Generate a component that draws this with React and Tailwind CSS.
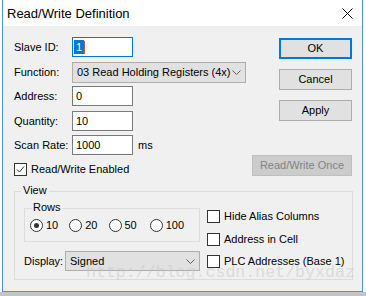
import React from 'react';

const font = { fontFamily: '"Liberation Sans", Arial, sans-serif' };

const TextBox = ({ value, width = 'w-[61px]' }) => (
  <div className={`${width} h-[20px] bg-white border border-[#7a7a7a] flex items-center pl-[3px] text-[11px] leading-none`}>
    {value}
  </div>
);

const Chevron = () => (
  <svg width="9" height="5" viewBox="0 0 9 5" className="shrink-0">
    <path d="M0.5 0.5 L4.5 4.5 L8.5 0.5" fill="none" stroke="#606060" strokeWidth="1" />
  </svg>
);

const Combo = ({ value, width }) => (
  <div className={`${width} h-[20px] bg-[#e1e1e1] border border-[#adadad] flex items-center justify-between pl-[4px] pr-[4px] text-[11px] leading-none`}>
    <span>{value}</span>
    <Chevron />
  </div>
);

const Button = ({ children, width = 'w-[73px]', primary, disabled }) => (
  <div
    className={`${width} h-[21px] flex items-center justify-center text-[11px] leading-none ${
      primary
        ? 'border-2 border-[#0078d7] bg-[#e1e1e1] text-black'
        : disabled
        ? 'border border-[#bfbfbf] bg-[#cccccc] text-[#838383]'
        : 'border border-[#adadad] bg-[#e1e1e1] text-black'
    }`}
  >
    {children}
  </div>
);

const CheckBox = ({ checked, label }) => (
  <div className="flex items-center h-[13px] gap-[4px] text-[11px] leading-none">
    <div className="w-[13px] h-[13px] bg-white border border-[#333333] flex items-center justify-center">
      {checked && (
        <svg width="9" height="9" viewBox="0 0 9 9">
          <path d="M1 4.5 L3.5 7 L8 1.5" fill="none" stroke="#333333" strokeWidth="1" />
        </svg>
      )}
    </div>
    <span>{label}</span>
  </div>
);

const Radio = ({ checked, label, className = '' }) => (
  <div className={`flex items-center h-[13px] gap-[3px] text-[11px] leading-none ${className}`}>
    <div className="w-[13px] h-[13px] rounded-full bg-white border border-[#333333] flex items-center justify-center">
      {checked && <div className="w-[5px] h-[5px] rounded-full bg-[#333333]" />}
    </div>
    <span>{label}</span>
  </div>
);

const Field = ({ label, children, className = '' }) => (
  <div className={`flex items-center ${className}`}>
    <span className="w-[58px] text-[11px] leading-none">{label}</span>
    {children}
  </div>
);

export default function App() {
  return (
    <div className="w-[366px] h-[296px] bg-white relative overflow-hidden text-black" style={font}>
      <div className="ml-[2px] w-[361px] h-[292px] border-x border-b border-[#4a94e0] flex flex-col">
        {/* title bar */}
        <div className="h-[26px] bg-white flex items-center justify-between pl-[4px] pr-[9px]">
          <span className="text-[13px] leading-none">Read/Write Definition</span>
          <svg width="11" height="11" viewBox="0 0 11 11">
            <path d="M0.5 0.5 L10.5 10.5 M10.5 0.5 L0.5 10.5" stroke="#000" strokeWidth="1" />
          </svg>
        </div>

        <div className="flex-1 bg-[#f0f0f0] flex flex-col">
          <div className="flex">
            <div className="pl-[11px] pt-[11px] flex flex-col">
              <Field label="Slave ID:">
                <div className="w-[61px] h-[20px] bg-white border border-[#0078d7] flex items-center pl-[1px] text-[11px] leading-none">
                  <span className="bg-[#0078d7] text-white px-[2px] h-[14px] flex items-center">1</span>
                  <span className="w-[1px] h-[13px] bg-[#c0602a]" />
                </div>
              </Field>
              <Field label="Function:" className="mt-[5px]">
                <Combo value="03 Read Holding Registers (4x)" width="w-[174px] h-[21px]" />
              </Field>
              <Field label="Address:" className="mt-[3px]">
                <TextBox value="0" />
              </Field>
              <Field label="Quantity:" className="mt-[5px]">
                <TextBox value="10" />
              </Field>
              <Field label="Scan Rate:" className="mt-[4px]">
                <TextBox value="1000" />
                <span className="ml-[5px] text-[11px] leading-none">ms</span>
              </Field>
              <div className="mt-[8px]">
                <CheckBox checked label="Read/Write Enabled" />
              </div>
            </div>

            <div className="ml-auto pr-[10px] pt-[12px] flex flex-col items-end">
              <Button primary>OK</Button>
              <div className="mt-[10px]"><Button>Cancel</Button></div>
              <div className="mt-[10px]"><Button>Apply</Button></div>
              <div className="mt-[34px]"><Button width="w-[100px]" disabled>Read/Write Once</Button></div>
            </div>
          </div>

          {/* View group */}
          <div className="relative ml-[11px] mr-[9px] mt-[15px] h-[89px] border border-[#dcdcdc] pt-[16px] pl-[9px] flex">
            <span className="absolute left-[6px] top-[-8px] px-[2px] bg-[#f0f0f0] text-[11px] leading-[13px]">View</span>
            <div className="flex flex-col">
              <div className="relative w-[176px] h-[34px] border border-[#dcdcdc] pt-[10px] pl-[5px] flex">
                <span className="absolute left-[7px] top-[-8px] px-[1px] bg-[#f0f0f0] text-[11px] leading-[13px]">Rows</span>
                <Radio checked label="10" />
                <Radio label="20" className="ml-[11px]" />
                <Radio label="50" className="ml-[11px]" />
                <Radio label="100" className="ml-[13px]" />
              </div>
              <div className="flex items-center mt-[9px]">
                <span className="w-[41px] text-[11px] leading-none">Display:</span>
                <Combo value="Signed" width="w-[135px]" />
              </div>
            </div>
            <div className="ml-[7px] mt-[2px] flex flex-col">
              <CheckBox label="Hide Alias Columns" />
              <div className="mt-[10px]"><CheckBox label="Address in Cell" /></div>
              <div className="mt-[9px]"><CheckBox label="PLC Addresses (Base 1)" /></div>
            </div>
          </div>
        </div>
      </div>
      <div className="h-[4px] bg-[#c4c4c4]" />

      <div
        className="absolute left-[86px] top-[265px] text-[16.6px] leading-none text-[#c8c8c8] opacity-50 pointer-events-none whitespace-nowrap"
        style={{ fontFamily: '"Liberation Mono", "Courier New", monospace' }}
      >
        http://blog.csdn.net/byxdaz
      </div>
    </div>
  );
}
